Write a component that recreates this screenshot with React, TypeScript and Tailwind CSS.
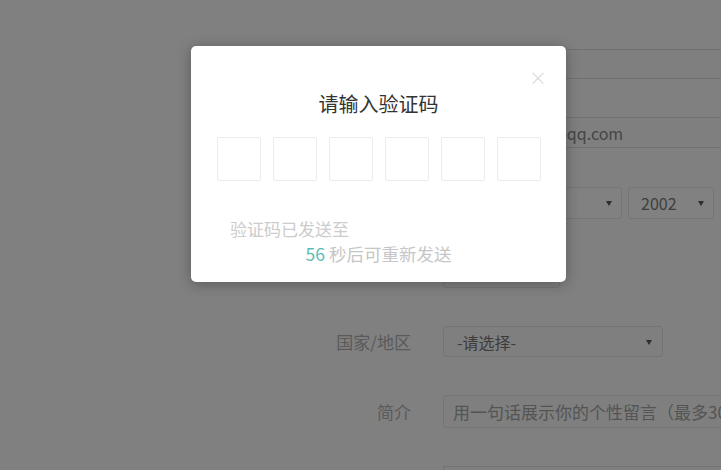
import React from "react";

const font = { fontFamily: '"Noto Sans CJK SC", "Noto Sans", sans-serif' };

function Caret() {
  return (
    <svg width="8" height="8" viewBox="0 0 8 8" className="shrink-0">
      <path d="M1 2 L7 2 L4 7 Z" fill="#2e2e2e" />
    </svg>
  );
}

function Row({
  label,
  top,
  children,
}: {
  label?: string;
  top: string;
  children: React.ReactNode;
}) {
  return (
    <div className={`flex items-stretch ${top}`}>
      <div className="w-[411px] shrink-0 flex items-center justify-end text-[17px] text-[#5a5a5a]">
        {label}
      </div>
      <div className="ml-[32px] flex-1 flex gap-[6px]">{children}</div>
    </div>
  );
}

export default function App() {
  return (
    <div className="relative w-[721px] h-[470px] overflow-hidden bg-[#808080]" style={font}>
      {/* dimmed form behind */}
      <div className="flex flex-col">
        <Row top="mt-[49px]">
          <div className="h-[30px] w-[300px] border border-[#717171] bg-[#7f7f7f]" />
        </Row>
        <Row top="mt-[38px]">
          <div className="h-[31px] w-[300px] border border-[#717171] bg-[#7f7f7f] flex items-center pl-[10px] text-[16px] text-[#454545]">
            12345678901@qq.com
          </div>
        </Row>
        <Row top="mt-[39px]">
          <div className="h-[32px] w-[80px] border border-[#757575] rounded-[3px] bg-[#7f7f7f]" />
          <div className="h-[32px] w-[93px] border border-[#757575] rounded-[3px] bg-[#818181] flex items-center justify-end pr-[8px]">
            <Caret />
          </div>
          <div className="h-[32px] w-[86px] border border-[#757575] rounded-[3px] bg-[#818181] flex items-center justify-between pl-[12px] pr-[8px] text-[16px] text-[#3e3e3e]">
            <span>2002</span>
            <Caret />
          </div>
        </Row>
        <Row top="mt-[38px]">
          <div className="h-[31px] w-[117px] border border-[#757575] rounded-[3px] bg-[#7f7f7f]" />
        </Row>
        <Row top="mt-[38px]" label="国家/地区">
          <div className="h-[31px] w-[220px] border border-[#747474] rounded-[3px] bg-[#7f7f7f] flex items-center justify-between pl-[13px] pr-[9px] text-[16px] text-[#3c3c3c]">
            <span>-请选择-</span>
            <Caret />
          </div>
        </Row>
        <Row top="mt-[38px]" label="简介">
          <div className="h-[33px] w-[340px] shrink-0 border border-[#747474] rounded-l-[3px] bg-[#7f7f7f] flex items-center pl-[9px] text-[17px] text-[#545454] whitespace-nowrap overflow-hidden">
            用一句话展示你的个性留言（最多30字）
          </div>
        </Row>
        <Row top="mt-[38px]">
          <div className="h-[31px] w-[300px] border border-[#747474] bg-[#7f7f7f]" />
        </Row>
      </div>

      {/* modal */}
      <div className="absolute left-[191px] top-[46px] w-[375px] h-[236px] bg-white rounded-[5px] shadow-[0_2px_14px_rgba(0,0,0,0.3)]">
        <div className="absolute right-[19px] top-[21px] text-[18px] leading-[20px] text-[#d4d4d4] font-light">
          ×
        </div>
        <div className="flex flex-col">
          <div className="pt-[44px] text-center text-[20px] leading-[28px] text-[#333333]">
            请输入验证码
          </div>
          <div className="mt-[19px] flex justify-center gap-[12px]">
            {[0, 1, 2, 3, 4, 5].map((i) => (
              <div
                key={i}
                className="w-[44px] h-[44px] border border-[#ececec] rounded-[2px]"
              />
            ))}
          </div>
          <div className="mt-[36px] pl-[39px] text-[17px] leading-[24px] text-[#cccccc]">
            验证码已发送至
          </div>
          <div className="mt-[1px] text-center text-[17.5px] leading-[24px] text-[#c6c6c6]">
            <span className="text-[#5cbdb6]">56</span> 秒后可重新发送
          </div>
        </div>
      </div>
    </div>
  );
}
